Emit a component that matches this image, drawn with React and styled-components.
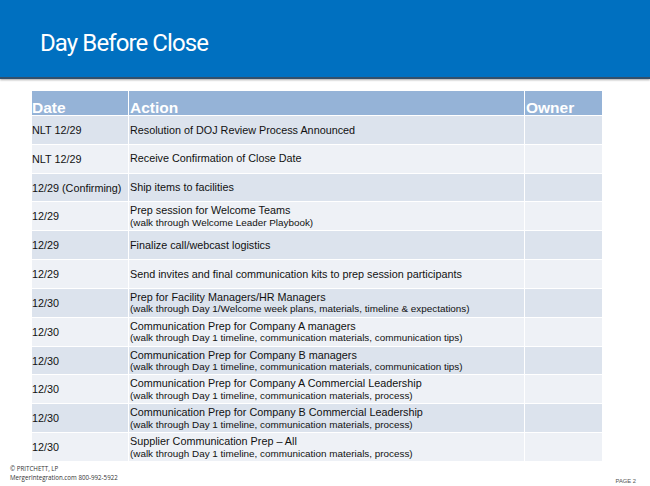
import React from "react";
import styled, { createGlobalStyle } from "styled-components";

const GlobalStyle = createGlobalStyle`
  html, body { margin: 0; padding: 0; background: #ffffff; }
  body { font-family: "Liberation Sans", Arial, sans-serif; }
`;

const Page = styled.div`
  width: 650px;
  height: 486px;
  display: flex;
  flex-direction: column;
  background: #ffffff;
  overflow: hidden;
`;

const TitleBar = styled.header`
  height: 79px;
  flex: none;
  background: #0070c0;
  border-bottom: 2px solid #33506b;
  box-shadow: 0 1px 2px rgba(0, 0, 0, 0.35);
  display: flex;
  align-items: flex-start;
  padding: 28px 0 0 40px;
  box-sizing: border-box;
`;

const Title = styled.h1`
  margin: 0;
  font-family: Roboto, "Open Sans", sans-serif;
  font-weight: 400;
  font-size: 24px;
  letter-spacing: -0.9px;
  line-height: 30px;
  color: #ffffff;
`;

const Main = styled.main`
  padding: 12px 48px 0 32px;
  flex: none;
`;

const Grid = styled.div`
  display: grid;
  grid-template-columns: 96px 395px 77px;
  grid-template-rows: 24px repeat(12, 27.83px);
  gap: 1px;
  background: #ffffff;
  width: 570px;
`;

const HeadCell = styled.div`
  background: #95b3d7;
  color: #ffffff;
  font-family: "Liberation Sans", Arial, sans-serif;
  font-weight: 700;
  font-size: 15.5px;
  line-height: 15.5px;
  display: flex;
  align-items: flex-end;
  padding-left: ${(p) => (p.$pad ? "1px" : "0")};
`;

const Cell = styled.div`
  background: ${(p) => (p.$dark ? "#dce3ed" : "#eef1f6")};
  color: #111111;
  font-family: "Liberation Sans", Arial, sans-serif;
  font-size: 10.8px;
  display: flex;
  flex-direction: column;
  justify-content: center;
  padding-left: ${(p) => (p.$pad ? "1px" : "0")};
  white-space: nowrap;
`;

const ActionText = styled.span`
  line-height: 12.5px;
`;

const Sub = styled.span`
  font-size: 9.9px;
  line-height: 11.5px;
`;

const Footer = styled.footer`
  flex: 1;
  display: flex;
  justify-content: space-between;
  align-items: flex-start;
  padding: 3px 14px 0 10px;
  box-sizing: border-box;
`;

const Legal = styled.div`
  display: flex;
  flex-direction: column;
  font-family: "Open Sans", "Liberation Sans", sans-serif;
  font-size: 6.2px;
  line-height: 9px;
  color: #333333;
`;

const PageNum = styled.div`
  align-self: flex-end;
  margin-bottom: 1px;
  font-family: "Liberation Sans", Arial, sans-serif;
  font-size: 5.8px;
  line-height: 8px;
  color: #555555;
`;

const rows = [
  ["NLT 12/29", "Resolution of DOJ Review Process Announced"],
  ["NLT 12/29", "Receive Confirmation of Close Date"],
  ["12/29 (Confirming)", "Ship items to facilities"],
  ["12/29", "Prep session for Welcome Teams", "(walk through Welcome Leader Playbook)"],
  ["12/29", "Finalize call/webcast logistics"],
  ["12/29", "Send invites and final communication kits to prep session participants"],
  [
    "12/30",
    "Prep for Facility Managers/HR Managers",
    "(walk through Day 1/Welcome week plans, materials, timeline & expectations)",
  ],
  [
    "12/30",
    "Communication Prep for Company A managers",
    "(walk through Day 1 timeline, communication materials, communication tips)",
  ],
  [
    "12/30",
    "Communication Prep for Company B managers",
    "(walk through Day 1 timeline, communication materials, communication tips)",
  ],
  [
    "12/30",
    "Communication Prep for Company A Commercial Leadership",
    "(walk through Day 1 timeline, communication materials, process)",
  ],
  [
    "12/30",
    "Communication Prep for Company B Commercial Leadership",
    "(walk through Day 1 timeline, communication materials, process)",
  ],
  [
    "12/30",
    "Supplier Communication Prep \u2013 All",
    "(walk through Day 1 timeline, communication materials, process)",
  ],
];

export default function App() {
  return (
    <>
      <GlobalStyle />
      <Page>
        <TitleBar>
          <Title>Day Before Close</Title>
        </TitleBar>
        <Main>
          <Grid>
            <HeadCell>Date</HeadCell>
            <HeadCell $pad>Action</HeadCell>
            <HeadCell $pad>Owner</HeadCell>
            {rows.map(([date, action, sub], i) => {
              const dark = i % 2 === 0;
              return (
                <React.Fragment key={i}>
                  <Cell $dark={dark}>{date}</Cell>
                  <Cell $dark={dark} $pad>
                    <ActionText>{action}</ActionText>
                    {sub && <Sub>{sub}</Sub>}
                  </Cell>
                  <Cell $dark={dark} />
                </React.Fragment>
              );
            })}
          </Grid>
        </Main>
        <Footer>
          <Legal>
            <span>© PRITCHETT, LP</span>
            <span>MergerIntegration.com 800-992-5922</span>
          </Legal>
          <PageNum>PAGE 2</PageNum>
        </Footer>
      </Page>
    </>
  );
}
